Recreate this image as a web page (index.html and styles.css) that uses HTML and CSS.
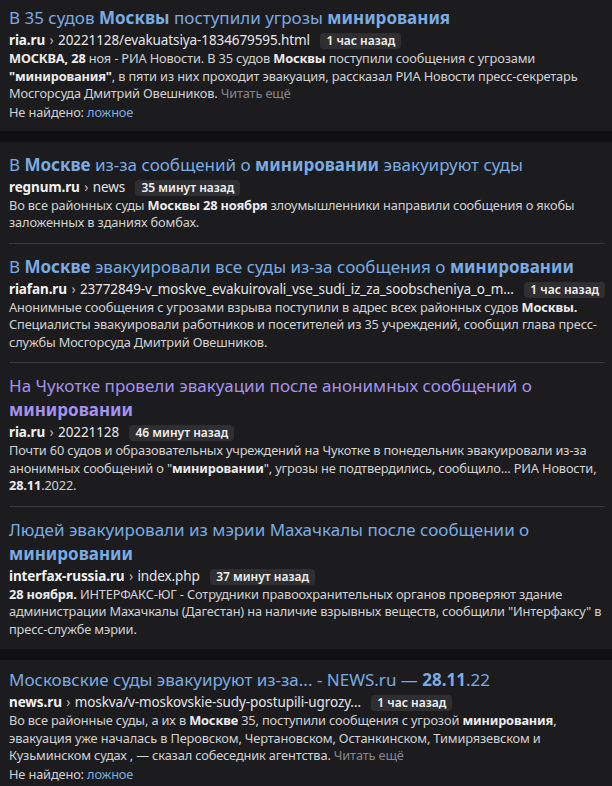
FILE: index.html
```html
<!DOCTYPE html>
<html lang="ru">
<head>
    <meta charset="utf-8">
    <link rel="stylesheet" href="styles.css">
</head>
<body>
    <div class="card first">
        <div class="item">
            <a class="title">В 35 судов <b>Москвы</b> поступили угрозы <b>минирования</b></a>
            <div class="source"><b>ria.ru</b> <span class="sep">›</span> 20221128/evakuatsiya-1834679595.html <span class="badge">1 час назад</span></div>
            <p class="text"><b>МОСКВА, 28</b> ноя - РИА Новости. В 35 судов <b>Москвы</b> поступили сообщения с угрозами <b>"минирования"</b>, в пяти из них проходит эвакуация, рассказал РИА Новости пресс-секретарь Мосгорсуда Дмитрий Овешников. <span class="more">Читать ещё</span></p>
            <div class="missing">Не найдено: <a class="link">ложное</a></div>
        </div>
    </div>

    <div class="card">
        <div class="item">
            <a class="title">В <b>Москве</b> из-за сообщений о <b>минировании</b> эвакуируют суды</a>
            <div class="source"><b>regnum.ru</b> <span class="sep">›</span> news <span class="badge">35 минут назад</span></div>
            <p class="text">Во все районных суды <b>Москвы 28 ноября</b> злоумышленники направили сообщения о якобы заложенных в зданиях бомбах.</p>
        </div>
        <div class="item">
            <a class="title">В <b>Москве</b> эвакуировали все суды из-за сообщения о <b>минировании</b></a>
            <div class="source"><b>riafan.ru</b> <span class="sep">›</span> 23772849-v_moskve_evakuirovali_vse_sudi_iz_za_soobscheniya_o_m... <span class="badge">1 час назад</span></div>
            <p class="text">Анонимные сообщения с угрозами взрыва поступили в адрес всех районных судов <b>Москвы.</b> Специалисты эвакуировали работников и посетителей из 35 учреждений, сообщил глава пресс-службы Мосгорсуда Дмитрий Овешников.</p>
        </div>
        <div class="item">
            <a class="title visited">На Чукотке провели эвакуации после анонимных сообщений о <b>минировании</b></a>
            <div class="source"><b>ria.ru</b> <span class="sep">›</span> 20221128 <span class="badge">46 минут назад</span></div>
            <p class="text">Почти 60 судов и образовательных учреждений на Чукотке в понедельник эвакуировали из-за анонимных сообщений о "<b>минировании</b>", угрозы не подтвердились, сообщило... РИА Новости, <b>28.11</b>.2022.</p>
        </div>
        <div class="item">
            <a class="title">Людей эвакуировали из мэрии Махачкалы после сообщении о <b>минировании</b></a>
            <div class="source"><b>interfax-russia.ru</b> <span class="sep">›</span> index.php <span class="badge">37 минут назад</span></div>
            <p class="text"><b>28 ноября.</b> ИНТЕРФАКС-ЮГ - Сотрудники правоохранительных органов проверяют здание администрации Махачкалы (Дагестан) на наличие взрывных веществ, сообщили "Интерфаксу" в пресс-службе мэрии.</p>
        </div>
    </div>

    <div class="card last">
        <div class="item">
            <a class="title">Московские суды эвакуируют из-за... - NEWS.ru — <b>28.11</b>.22</a>
            <div class="source"><b>news.ru</b> <span class="sep">›</span> moskva/v-moskovskie-sudy-postupili-ugrozy... <span class="badge">1 час назад</span></div>
            <p class="text">Во все районные суды, а их в <b>Москве</b> 35, поступили сообщения с угрозой <b>минирования</b>, эвакуация уже началась в Перовском, Чертановском, Останкинском, Тимирязевском и Кузьминском судах , — сказал собеседник агентства. <span class="more">Читать ещё</span></p>
            <div class="missing">Не найдено: <a class="link">ложное</a></div>
        </div>
    </div>
</body>
</html>
```

FILE: styles.css
```css
:root {
    --page: #101012;
    --card: #1c1c1e;
    --line: #3a3a3d;
    --blue: #7aabe2;
    --violet: #a592ee;
}

body {
    margin: 0;
    background-color: var(--page);
    color: #d2d2d4;
    font-family: "Noto Sans", "Open Sans", sans-serif;
}

.card {
    background-color: var(--card);
    padding: 0 4px 0 9px;
    margin-bottom: 11px;
}
.first .item {
    padding-top: 6px;
    padding-bottom: 10px;
}
.last .item {
    padding-top: 8px;
}

.item {
    padding: 11px 0;
    border-bottom: 1px solid var(--line);
    margin-right: 3px;
}
.item:last-child {
    border-bottom: none;
}

.title {
    display: block;
    font-size: 17px;
    line-height: 24px;
    color: var(--blue);
}
.title b {
    font-weight: 700;
}
.visited {
    color: var(--violet);
}

.source {
    font-size: 13.5px;
    letter-spacing: -0.1px;
    line-height: 20px;
    white-space: nowrap;
    color: #e6e6e8;
}
.source b {
    color: #f2f2f2;
}
.sep {
    color: #bbb;
    margin: 0 1px;
}
.badge {
    display: inline-block;
    margin-left: 7px;
    padding: 0 6px;
    background-color: #2f2f32;
    border-radius: 4px;
    font-size: 12px;
    font-weight: 600;
    letter-spacing: 0;
    line-height: 16px;
    color: #f0f0f0;
}

.text {
    margin: 0;
    font-size: 12.8px;
    letter-spacing: -0.15px;
    line-height: 17.5px;
}
.text b {
    color: #ececee;
}
.more {
    color: #86868a;
}

.missing {
    font-size: 12.8px;
    letter-spacing: -0.15px;
    line-height: 18px;
}
.link {
    color: var(--blue);
}
```
